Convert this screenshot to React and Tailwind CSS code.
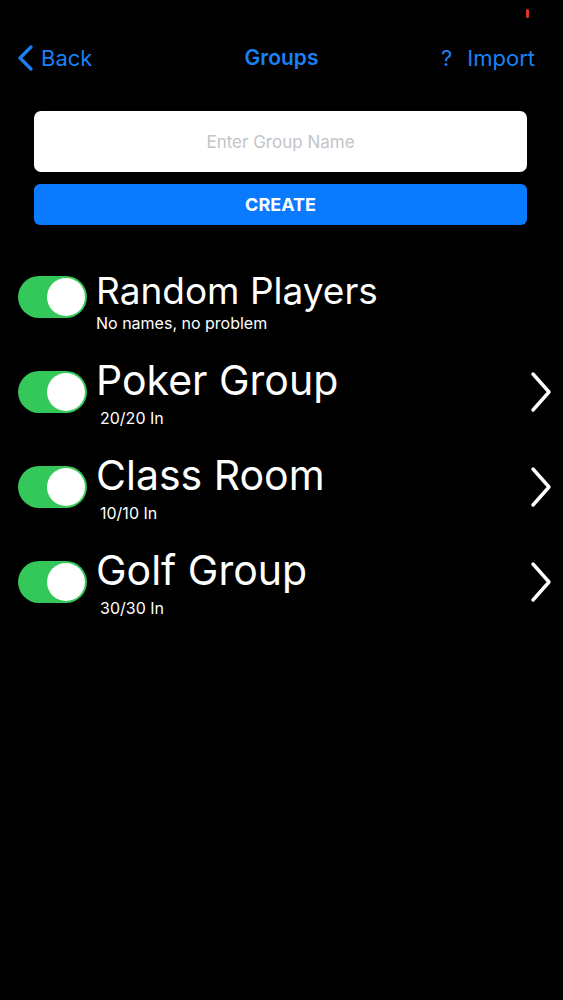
import { useState } from "react";

const groups = [
  { name: "Random Players", sub: "No names, no problem", chevron: false },
  { name: "Poker Group", sub: "20/20 In", chevron: true },
  { name: "Class Room", sub: "10/10 In", chevron: true },
  { name: "Golf Group", sub: "30/30 In", chevron: true },
];

function Toggle({ on, onClick }) {
  return (
    <button
      onClick={onClick}
      className={`flex h-[42px] w-[69px] shrink-0 items-center rounded-full p-[2px] ${
        on ? "justify-end bg-[#34c759]" : "justify-start bg-[#39393d]"
      }`}
    >
      <span className="block h-[38px] w-[38px] rounded-full bg-white" />
    </button>
  );
}

export default function App() {
  const [name, setName] = useState("");
  const [toggles, setToggles] = useState([true, true, true, true]);

  return (
    <div className="relative min-h-[1000px] w-full bg-black font-['Inter','Liberation_Sans',sans-serif]">
      {/* status bar dot */}
      <div className="absolute left-[526px] top-[9px] h-[9px] w-[3px] rounded-full bg-[#e0342c]" />

      {/* Header */}
      <header className="grid grid-cols-3 items-center pt-[44px] text-[22px] leading-[28px] text-[#1a80f5]">
        <div className="flex items-center pl-[17px]">
          <svg width="17" height="26" viewBox="0 0 17 26" className="mr-[7px]">
            <path d="M14 2 L3 13 L14 24" fill="none" stroke="currentColor" strokeWidth="3.2" strokeLinecap="round" strokeLinejoin="round" />
          </svg>
          <span>Back</span>
        </div>
        <div className="text-center text-[21px] font-semibold">Groups</div>
        <div className="flex justify-end pr-[28px]">
          <span className="mr-[15px]">?</span>
          <span>Import</span>
        </div>
      </header>

      {/* Create form */}
      <div className="ml-[34px] mt-[39px] w-[493px]">
        <input
          value={name}
          onChange={(e) => setName(e.target.value)}
          placeholder="Enter Group Name"
          className="h-[61px] w-full rounded-[7px] bg-white text-center text-[17px] text-black outline-none placeholder:text-[#c4c4c7]"
        />
        <button className="mt-[12px] h-[41px] w-full rounded-[6px] bg-[#0a7aff] text-[18px] font-bold text-white">
          CREATE
        </button>
      </div>

      {/* Group list */}
      <ul className="mt-[47px]">
        {groups.map((g, i) => (
          <li key={g.name} className="flex h-[95px] items-start">
            <div className="ml-[18px] mt-[4px]">
              <Toggle
                on={toggles[i]}
                onClick={() => setToggles(toggles.map((t, j) => (j === i ? !t : t)))}
              />
            </div>
            <div className="ml-[9px] flex-1">
              <div
                className={`text-white ${
                  g.chevron ? "-mt-[7px] text-[41px] leading-[41px]" : "text-[37px] leading-[37px]"
                }`}
              >
                {g.name}
              </div>
              <div
                className={`text-[16px] leading-[20px] text-white ${
                  g.chevron ? "mt-[7px] pl-[4px]" : "mt-[4px]"
                }`}
              >
                {g.sub}
              </div>
            </div>
            {g.chevron && (
              <svg width="24" height="42" viewBox="0 0 24 42" className="mr-[10px] mt-[4px]">
                <path d="M4 3 L20 21 L4 39" fill="none" stroke="white" strokeWidth="3.4" strokeLinecap="round" strokeLinejoin="round" />
              </svg>
            )}
          </li>
        ))}
      </ul>
    </div>
  );
}
